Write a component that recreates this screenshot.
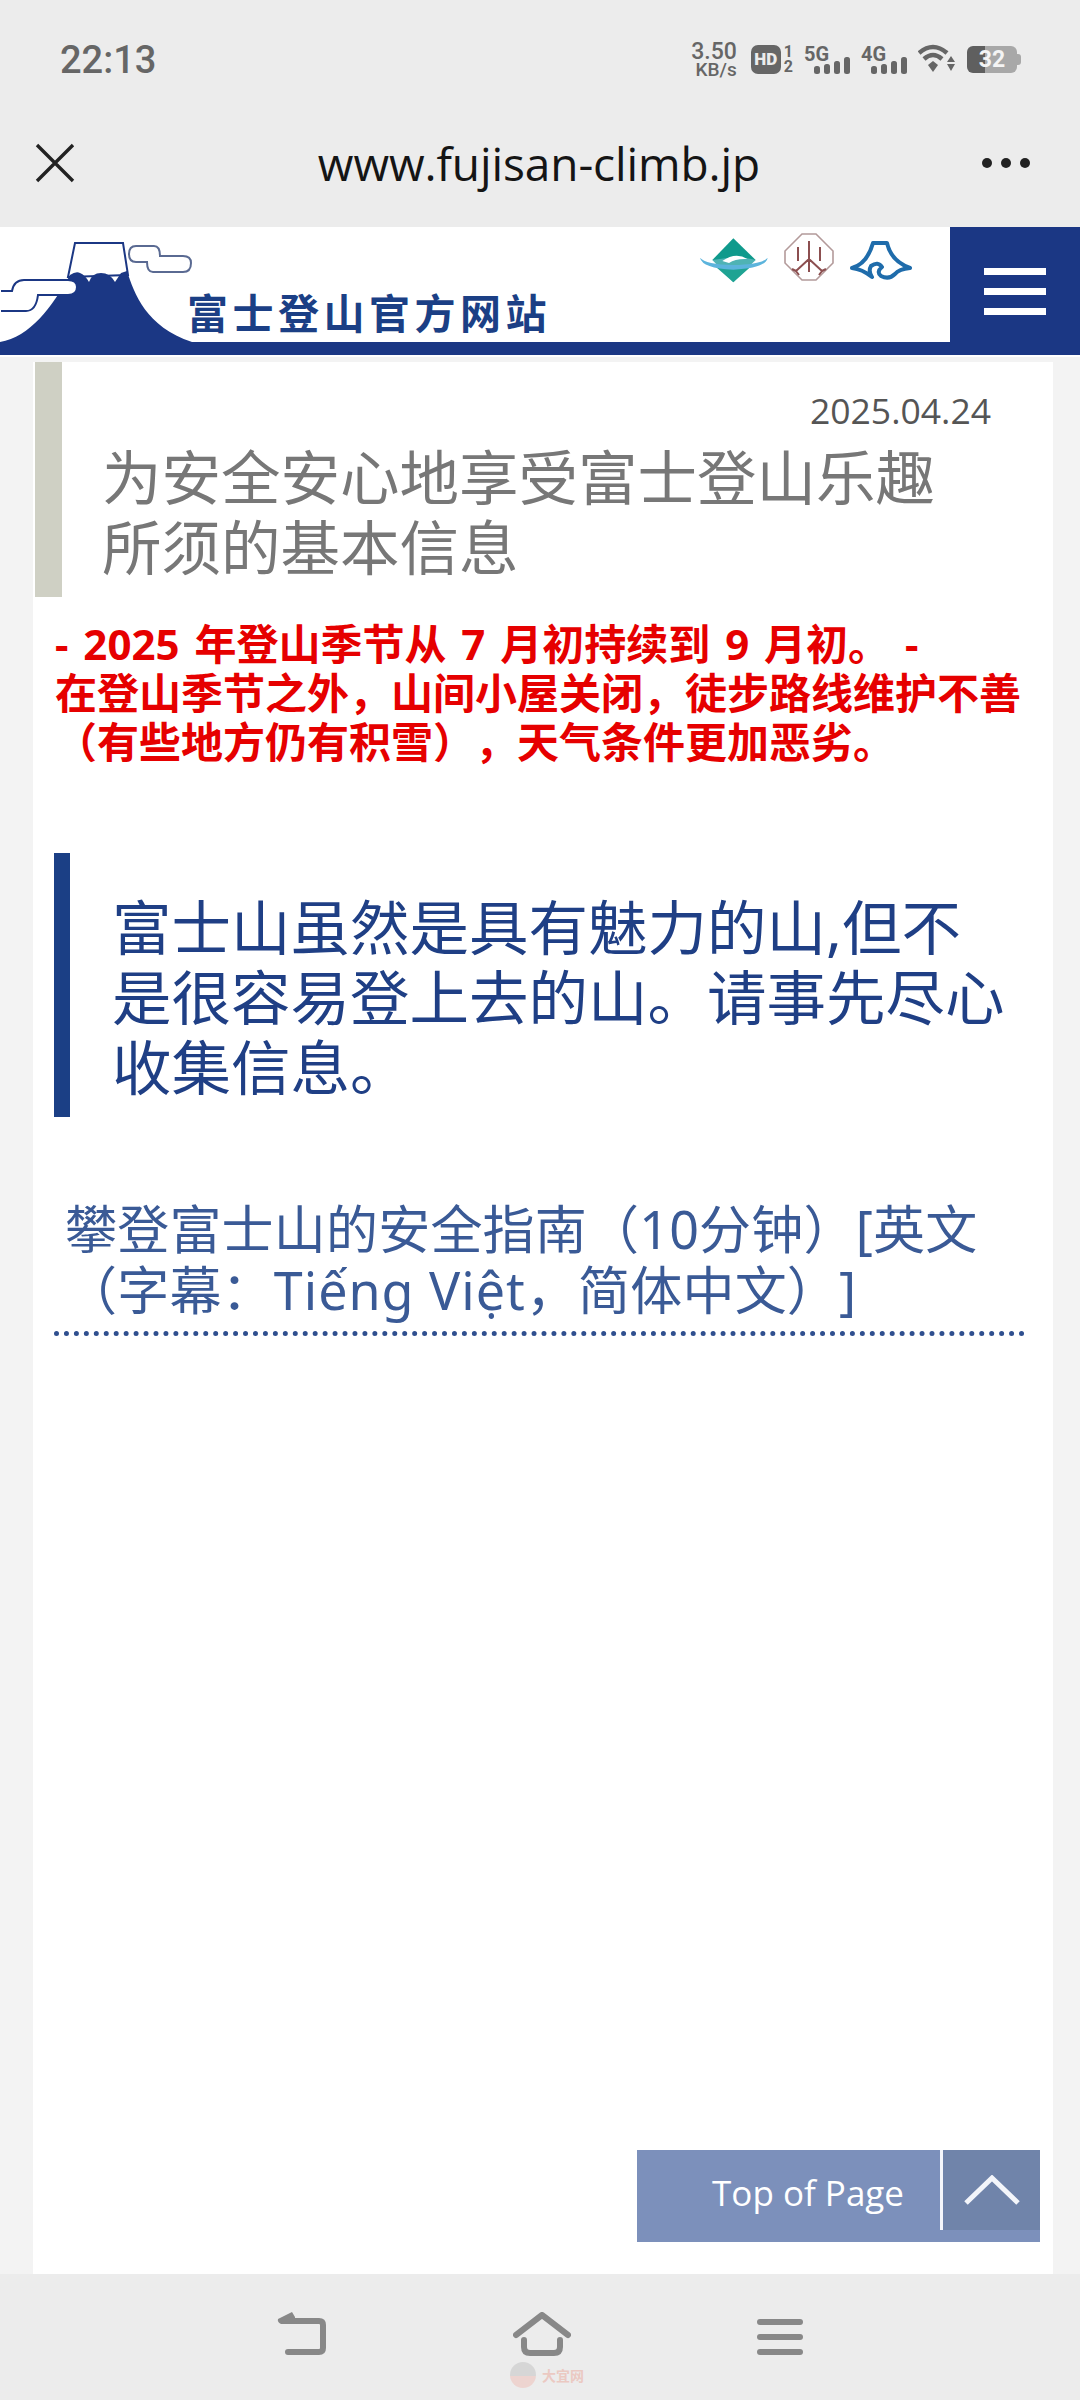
<div class="page">
  <div class="status">
    <span class="time">22:13</span>
    <div class="status-icons">
      <div class="speed"><span>3.50</span><span class="unit">KB/s</span></div>
      <div class="hd"><span class="hd-box">HD</span><span class="hd-num">1<br />2</span></div>
      <div class="net">
        <span>5G</span>
        <svg width="36" height="17" viewBox="0 0 36 17"><rect x="0" y="9" width="6" height="8" rx="2.5" /><rect x="10" y="7" width="6" height="10" rx="2.5" /><rect x="20" y="4" width="6" height="13" rx="2.5" /><rect x="30" y="0" width="6" height="17" rx="2.5" /></svg>
      </div>
      <div class="net">
        <span>4G</span>
        <svg width="36" height="17" viewBox="0 0 36 17"><rect x="0" y="9" width="6" height="8" rx="2.5" /><rect x="10" y="7" width="6" height="10" rx="2.5" /><rect x="20" y="4" width="6" height="13" rx="2.5" /><rect x="30" y="0" width="6" height="17" rx="2.5" /></svg>
      </div>
      <svg class="wifi" width="38" height="30" viewBox="0 0 38 30">
        <path d="M1 9 Q15 -3 29 9" fill="none" stroke="#666" stroke-width="4.5" />
        <path d="M6 15 Q15 7 24 15" fill="none" stroke="#666" stroke-width="4.5" />
        <path d="M10 21 L15 17 L20 21 L15 28 Z" fill="#666" />
        <path d="M33 12 L37 18 L29 18 Z M29 20 L37 20 L33 27 Z" fill="#666" />
      </svg>
      <div class="battery">
        <span class="battery-num">32</span>
      </div>
    </div>
  </div>

  <div class="toolbar">
    <svg class="close" width="40" height="40" viewBox="0 0 40 40"><path d="M2 2 L38 38 M38 2 L2 38" stroke="#222" stroke-width="3.4" fill="none" /></svg>
    <span class="url">www.fujisan-climb.jp</span>
    <div class="dots"><i></i><i></i><i></i></div>
  </div>

  <header>
    <div class="head-main">
      <svg class="fuji" width="192" height="115" viewBox="0 0 192 115">
        <path d="M75 16 L123 16 L128 48 L68 50 Z" fill="#fff" stroke="#1b3784" stroke-width="2" />
        <path d="M70 48 Q76 44 80 46 Q85 48 89 55 Q92 46 101 46 Q110 46 115 55 L121 46 L127 44 C134 66 146 100 192 115 L0 115 C30 110 52 80 70 48 Z" fill="#1b3784" />
        <path d="M1 64 L12 64 Q14 53 24 53 L68 53 Q77 53 77 60 Q77 68 68 68 L38 68 Q36 84 26 84 L1 84 M1 64" fill="#fff" stroke="#1b3784" stroke-width="2" />
        <path d="M136 19 L154 19 Q160 19 160 29 L183 29 Q191 29 191 36 Q191 45 183 45 L153 45 Q147 45 147 35 L136 35 Q129 35 129 27 Q129 19 136 19 Z" fill="#fff" stroke="#5a6a92" stroke-width="2" />
      </svg>
      <span class="brand">富士登山官方网站</span>
      <div class="crests">
        <svg width="70" height="50" viewBox="0 0 210 150">
          <path d="M103 10 L40 75 Q95 90 170 75 Z" fill="#0f9a8c" />
          <path d="M40 75 Q120 60 170 75 L103 142 Z" fill="#4fb3b4" />
          <path d="M50 95 Q100 105 155 95 L103 142 Z" fill="#1fa393" />
          <path d="M3 68 Q10 100 103 104 Q200 100 206 68 Q190 88 103 90 Q20 88 3 68 Z" fill="#5cb4dc" />
          <path d="M70 78 Q110 50 145 72 Q110 70 90 84 Z" fill="#fff" />
        </svg>
        <svg width="52" height="50" viewBox="0 0 52 50">
          <path d="M19 2 L33 2 L50 19 L50 31 L33 48 L19 48 L2 31 L2 19 Z" fill="#fff" stroke="#b39a9a" stroke-width="1.6" />
          <path d="M26 9 V40 M26 27 L13 39 M26 27 L39 39 M15 15 V29 M37 15 V29 M13 39 L9 37 M13 39 L16 43 M39 39 L43 37 M39 39 L36 43" fill="none" stroke="#8c4f50" stroke-width="2" />
        </svg>
        <svg width="64" height="42" viewBox="0 0 64 42">
          <path d="M3 29 Q18 25 24 4 L38 4 Q42 22 61 29 Q50 30 46 35 Q40 41 32 37 Q27 33 33 28 Q29 22 22 27 Q19 32 23 38 Q13 30 3 29 Z" fill="none" stroke="#1f6cab" stroke-width="4" stroke-linejoin="round" />
        </svg>
      </div>
    </div>
    <button class="menu" aria-label="Menu"><i></i><i></i><i></i></button>
  </header>

  <main>
    <div class="title-block">
      <p class="date">2025.04.24</p>
      <h1>为安全安心地享受富士登山乐趣<br />所须的基本信息</h1>
    </div>

    <div class="notice">
      <p>- 2025 年登山季节从 7 月初持续到 9 月初。 -</p>
      <p>在登山季节之外，山间小屋关闭，徒步路线维护不善（有些地方仍有积雪），天气条件更加恶劣。</p>
    </div>

    <blockquote>富士山虽然是具有魅力的山,但不是很容易登上去的山。请事先尽心收集信息。</blockquote>

    <p class="guide">攀登富士山的安全指南（10分钟）[英文（字幕：<span class="latin">Tiếng Việt</span>，简体中文）]</p>

    <div class="to-top">
      <span class="to-top-label">Top of Page</span>
      <span class="to-top-arrow">
        <svg width="56" height="30" viewBox="0 0 56 30"><path d="M2 28 L28 3 L54 28" fill="none" stroke="#f3f5fa" stroke-width="5" /></svg>
      </span>
    </div>
  </main>

  <nav>
    <svg width="50" height="44" viewBox="0 0 50 44">
      <path d="M8 9 L42 9 Q46 9 46 13 L46 36 Q46 40 42 40 L11 40" fill="none" stroke="#888" stroke-width="6" stroke-linecap="round" stroke-linejoin="round" />
      <path d="M1 7 L15 0 L18 5 L18 12 L4 12 Q0 10 1 7 Z" fill="#888" />
    </svg>
    <div class="home">
      <svg width="58" height="44" viewBox="0 0 58 44">
        <path d="M3 23 L29 3 L55 23" fill="none" stroke="#888" stroke-width="6" stroke-linecap="round" stroke-linejoin="round" />
        <path d="M11 28 V35 Q11 41 17 41 L41 41 Q47 41 47 35 V28" fill="none" stroke="#888" stroke-width="6" stroke-linecap="round" />
      </svg>
      <div class="mark">
        <span class="mark-logo"></span>
        <span class="mark-text">大宜网</span>
      </div>
    </div>
    <div class="lines"><i></i><i></i><i></i></div>
  </nav>
</div>

<style>
  :global(body) {
    margin: 0;
    background: #f3f3f3;
  }

  .page {
    display: flex;
    flex-direction: column;
    height: 2400px;
    font-family: 'Noto Sans', 'Noto Sans CJK SC', sans-serif;
    text-spacing-trim: space-all;
  }

  p, h1, blockquote {
    margin: 0;
  }

  .status {
    display: flex;
    align-items: center;
    justify-content: space-between;
    height: 118px;
    padding: 0 63px 0 60px;
    background: #ececec;
    box-sizing: border-box;
  }

  .time {
    padding-top: 2px;
    font-family: Roboto, sans-serif;
    font-size: 38px;
    font-weight: 500;
    color: #666;
  }

  .status-icons {
    display: flex;
    align-items: center;
    gap: 11px;
    font-family: Roboto, sans-serif;
    color: #666;
  }

  .speed {
    display: flex;
    flex-direction: column;
    align-items: flex-end;
    width: 48px;
    margin-right: 3px;
    font-size: 23px;
    font-weight: 500;
    line-height: 20px;
  }

  .unit {
    font-size: 19px;
    line-height: 15px;
  }

  .hd {
    display: flex;
    align-items: center;
    gap: 3px;
  }

  .hd-box {
    width: 30px;
    height: 29px;
    border-radius: 7px;
    background: #666;
    color: #ececec;
    font-size: 17px;
    font-weight: 900;
    line-height: 29px;
    text-align: center;
  }

  .hd-num {
    font-size: 16px;
    font-weight: 700;
    line-height: 15px;
  }

  .net {
    position: relative;
    width: 46px;
    height: 29px;
    font-size: 20px;
    font-weight: 700;
    line-height: 18px;
  }

  .net span {
    position: absolute;
    left: 0;
    top: 0;
  }

  .net svg {
    position: absolute;
    right: 0;
    bottom: 0;
    fill: #666;
  }

  .battery {
    position: relative;
    width: 50px;
    height: 27px;
    border-radius: 6px;
    background: linear-gradient(90deg, #5f5f5f 0 36%, #a8a8a8 36% 100%);
    text-align: center;
  }

  .battery::after {
    content: '';
    position: absolute;
    right: -4px;
    top: 8px;
    width: 4px;
    height: 11px;
    border-radius: 0 3px 3px 0;
    background: #a8a8a8;
  }

  .battery-num {
    color: #f4f4f4;
    font-size: 23px;
    font-weight: 700;
    line-height: 27px;
  }

  .toolbar {
    display: flex;
    align-items: center;
    justify-content: space-between;
    height: 109px;
    padding: 0 50px 20px 35px;
    background: #ececec;
    box-sizing: border-box;
  }

  .url {
    margin-left: 21px;
    font-family: 'Open Sans', sans-serif;
    font-size: 46px;
    letter-spacing: -0.1px;
    color: #151515;
  }

  .dots {
    display: flex;
    gap: 9px;
  }

  .dots i {
    width: 10px;
    height: 10px;
    border-radius: 50%;
    background: #222;
  }

  header {
    display: flex;
    height: 130px;
    background: #fff;
  }

  .head-main {
    display: flex;
    flex: 1;
    position: relative;
    height: 128px;
    box-sizing: border-box;
    border-bottom: 13px solid #1b3784;
  }

  .fuji {
    flex: none;
    align-self: flex-end;
    margin-right: -5px;
  }

  .brand {
    align-self: flex-end;
    margin-bottom: 5px;
    font-family: 'Noto Sans CJK SC', sans-serif;
    font-size: 41px;
    font-weight: 700;
    letter-spacing: 4.5px;
    line-height: 52px;
    color: #1b3f85;
    white-space: nowrap;
  }

  .crests {
    display: flex;
    gap: 14px;
    align-items: flex-start;
    margin-left: auto;
    padding: 5px 37px 0 0;
  }

  .crests svg:first-child {
    margin-top: 3px;
  }

  .crests svg:last-child {
    margin-top: 7px;
  }

  .menu {
    display: flex;
    flex-direction: column;
    gap: 13px;
    align-items: center;
    justify-content: center;
    width: 130px;
    height: 128px;
    padding: 0;
    border: 0;
    background: #1b3784;
  }

  .menu i {
    width: 62px;
    height: 7px;
    background: #fff;
  }

  main {
    position: relative;
    flex: 1;
    margin: 5px 27px 0 33px;
    background: #fff;
  }

  .title-block {
    height: 235px;
    margin-left: 2px;
    padding: 28px 0 0 40px;
    border-left: 27px solid #cfd0c4;
    box-sizing: border-box;
  }

  .date {
    padding-right: 62px;
    font-family: 'Open Sans', sans-serif;
    font-size: 35.5px;
    line-height: 40px;
    color: #555;
    text-align: right;
  }

  h1 {
    margin-top: 12px;
    font-size: 59.5px;
    font-weight: 400;
    line-height: 70px;
    color: #777;
  }

  .notice {
    padding: 22px 16px 0 22px;
    font-size: 42px;
    font-weight: 700;
    line-height: 49px;
    word-spacing: 4px;
    color: #e60000;
  }

  blockquote {
    margin: 87px 10px 0 21px;
    padding: 39px 31px 15px 42px;
    border-left: 16px solid #1b3f85;
    font-size: 59.5px;
    line-height: 70px;
    color: #1f3f85;
  }

  .guide {
    margin: 81px 28px 0 21px;
    padding: 0 0 11px 11px;
    border-bottom: 5px dotted #2f4f8f;
    font-size: 52px;
    line-height: 61px;
    letter-spacing: 0.2px;
    color: #3a5a96;
  }

  .latin {
    letter-spacing: 1px;
  }

  .to-top {
    position: absolute;
    right: 13px;
    bottom: 32px;
    display: flex;
    justify-content: flex-end;
    width: 403px;
    height: 92px;
    background: #7c90bb;
  }

  .to-top-label {
    align-self: center;
    margin: 0 36px 8px 0;
    font-family: 'Open Sans', sans-serif;
    font-size: 35px;
    color: #fff;
  }

  .to-top-arrow {
    display: flex;
    align-items: center;
    justify-content: center;
    width: 97px;
    height: 80px;
    border-left: 3px solid #f4f6fb;
    background: #7084aa;
  }

  nav {
    position: relative;
    display: flex;
    align-items: flex-start;
    justify-content: center;
    gap: 186px;
    height: 126px;
    padding-top: 38px;
    background: #ececec;
    box-sizing: border-box;
  }

  .home {
    position: relative;
    height: 44px;
  }

  .mark {
    position: absolute;
    left: -3px;
    top: 50px;
    display: flex;
    align-items: center;
    gap: 6px;
    opacity: 0.45;
  }

  .mark-logo {
    width: 26px;
    height: 26px;
    border-radius: 50%;
    background: linear-gradient(#bdbdbd 0 55%, #f0b8b0 55% 100%);
  }

  .mark-text {
    font-size: 14px;
    font-weight: 700;
    color: #eaa090;
    white-space: nowrap;
  }

  .lines {
    display: flex;
    flex-direction: column;
    gap: 9px;
    padding-top: 7px;
  }

  .lines i {
    width: 46px;
    height: 6px;
    border-radius: 3px;
    background: #888;
  }
</style>
